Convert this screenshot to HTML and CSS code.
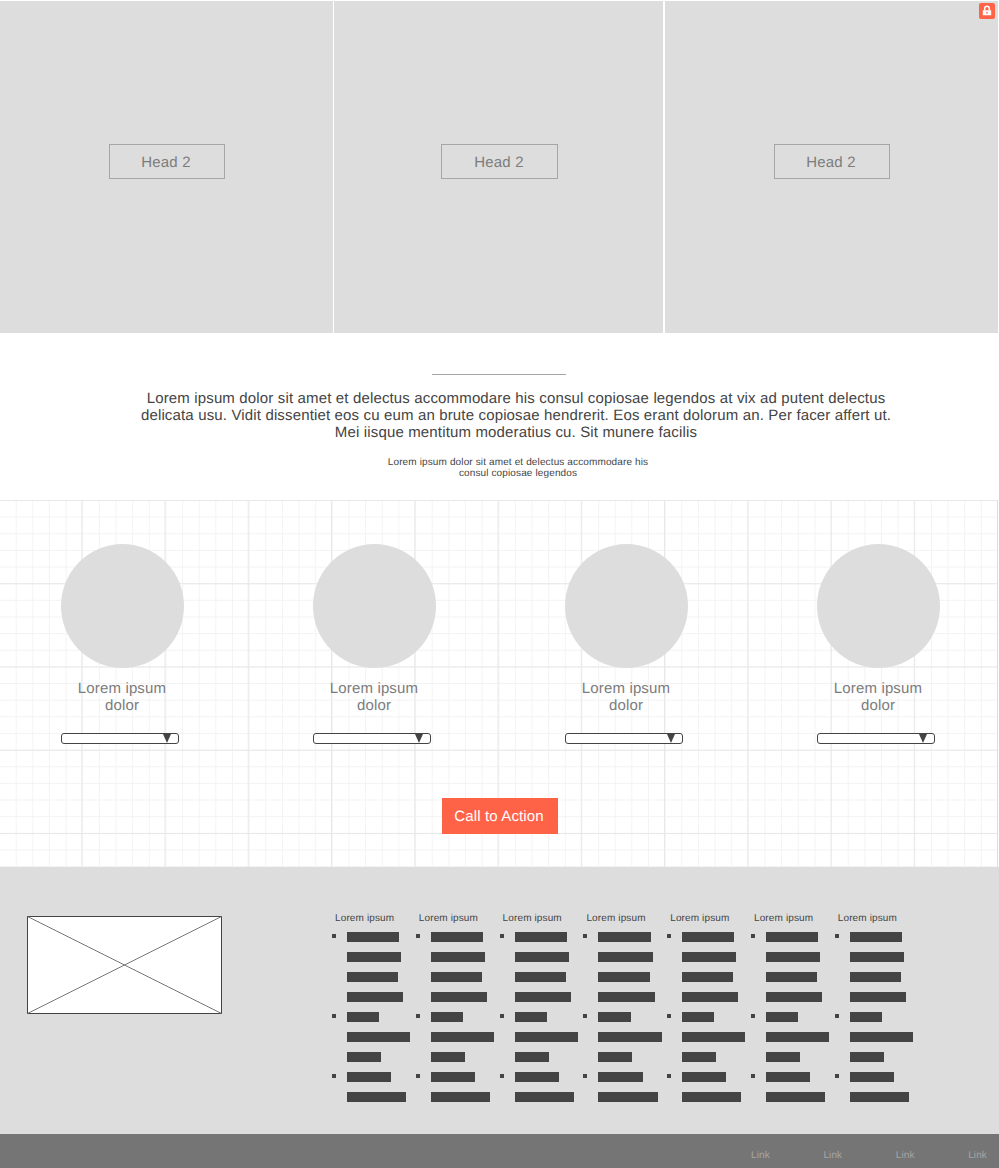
FILE: index.html
```html
<!DOCTYPE html>
<html lang="en">
<head>
<meta charset="utf-8">
<title>Wireframe</title>
<link rel="stylesheet" href="styles.css">
</head>
<body>
<section class="heroes">
  <div class="hero hero-a"><h2 class="head">Head 2</h2></div>
  <div class="hero hero-b"><h2 class="head head-wide">Head 2</h2></div>
  <div class="hero hero-c"><h2 class="head">Head 2</h2>
    <span class="lock"><svg viewBox="0 0 16 16" width="16" height="16"><path d="M5.7 7.2V5.5a2.3 2.3 0 0 1 4.6 0V7.2" fill="none" stroke="#fff" stroke-width="1.5"/><path d="M3.8 7.2h8.4v5.1H3.8z M7.4 8.8v2h1.2v-2z" fill="#fff" fill-rule="evenodd"/></svg></span>
  </div>
</section>
<section class="intro">
  <hr class="rule">
  <p class="lead">Lorem ipsum dolor sit amet et delectus accommodare his consul copiosae legendos at vix ad putent delectus delicata usu. Vidit dissentiet eos cu eum an brute copiosae hendrerit. Eos erant dolorum an. Per facer affert ut. Mei iisque mentitum moderatius cu. Sit munere facilis</p>
  <p class="sub">Lorem ipsum dolor sit amet et delectus accommodare his<br>consul copiosae legendos</p>
</section>
<section class="gridded">
  <div class="people">
    <div class="person"><div class="avatar"></div><p class="name">Lorem ipsum<br>dolor</p><div class="select"><span class="arrow"></span></div></div>
    <div class="person"><div class="avatar"></div><p class="name">Lorem ipsum<br>dolor</p><div class="select"><span class="arrow"></span></div></div>
    <div class="person"><div class="avatar"></div><p class="name">Lorem ipsum<br>dolor</p><div class="select"><span class="arrow"></span></div></div>
    <div class="person"><div class="avatar"></div><p class="name">Lorem ipsum<br>dolor</p><div class="select"><span class="arrow"></span></div></div>
  </div>
  <a class="cta">Call to Action</a>
</section>
<section class="footer">
  <div class="placeholder"><svg width="195" height="98" viewBox="0 0 195 98"><path d="M0.5 0.5L194.5 97.5M194.5 0.5L0.5 97.5" stroke="#777" stroke-width="1" fill="none"/></svg></div>
  <div class="cols">
    <div class="col"><h4 class="col-h">Lorem ipsum</h4><ul class="list"><li class="dot"><i class="b1"></i></li><li><i class="b2"></i></li><li><i class="b3"></i></li><li><i class="b4"></i></li><li class="dot"><i class="b5"></i></li><li><i class="b6"></i></li><li><i class="b7"></i></li><li class="dot"><i class="b8"></i></li><li><i class="b9"></i></li></ul></div>
    <div class="col"><h4 class="col-h">Lorem ipsum</h4><ul class="list"><li class="dot"><i class="b1"></i></li><li><i class="b2"></i></li><li><i class="b3"></i></li><li><i class="b4"></i></li><li class="dot"><i class="b5"></i></li><li><i class="b6"></i></li><li><i class="b7"></i></li><li class="dot"><i class="b8"></i></li><li><i class="b9"></i></li></ul></div>
    <div class="col"><h4 class="col-h">Lorem ipsum</h4><ul class="list"><li class="dot"><i class="b1"></i></li><li><i class="b2"></i></li><li><i class="b3"></i></li><li><i class="b4"></i></li><li class="dot"><i class="b5"></i></li><li><i class="b6"></i></li><li><i class="b7"></i></li><li class="dot"><i class="b8"></i></li><li><i class="b9"></i></li></ul></div>
    <div class="col"><h4 class="col-h">Lorem ipsum</h4><ul class="list"><li class="dot"><i class="b1"></i></li><li><i class="b2"></i></li><li><i class="b3"></i></li><li><i class="b4"></i></li><li class="dot"><i class="b5"></i></li><li><i class="b6"></i></li><li><i class="b7"></i></li><li class="dot"><i class="b8"></i></li><li><i class="b9"></i></li></ul></div>
    <div class="col"><h4 class="col-h">Lorem ipsum</h4><ul class="list"><li class="dot"><i class="b1"></i></li><li><i class="b2"></i></li><li><i class="b3"></i></li><li><i class="b4"></i></li><li class="dot"><i class="b5"></i></li><li><i class="b6"></i></li><li><i class="b7"></i></li><li class="dot"><i class="b8"></i></li><li><i class="b9"></i></li></ul></div>
    <div class="col"><h4 class="col-h">Lorem ipsum</h4><ul class="list"><li class="dot"><i class="b1"></i></li><li><i class="b2"></i></li><li><i class="b3"></i></li><li><i class="b4"></i></li><li class="dot"><i class="b5"></i></li><li><i class="b6"></i></li><li><i class="b7"></i></li><li class="dot"><i class="b8"></i></li><li><i class="b9"></i></li></ul></div>
    <div class="col"><h4 class="col-h">Lorem ipsum</h4><ul class="list"><li class="dot"><i class="b1"></i></li><li><i class="b2"></i></li><li><i class="b3"></i></li><li><i class="b4"></i></li><li class="dot"><i class="b5"></i></li><li><i class="b6"></i></li><li><i class="b7"></i></li><li class="dot"><i class="b8"></i></li><li><i class="b9"></i></li></ul></div>
  </div>
</section>
<nav class="bottom">
  <a class="link">Link</a><a class="link">Link</a><a class="link">Link</a><a class="link">Link</a>
</nav>
</body>
</html>
```
FILE: styles.css
```css
* { box-sizing: border-box; }
html, body { margin: 0; padding: 0; }
body { width: 999px; height: 1168px; overflow: hidden; background: #fff; font-family: "Liberation Sans", Arial, sans-serif; color: #444; text-rendering: geometricPrecision; -webkit-font-smoothing: antialiased; }

.heroes { display: flex; height: 333px; padding-top: 1px; }
.hero { position: relative; background: #ddd; display: flex; justify-content: center; padding-top: 143px; }
.hero-a { width: 333px; margin-right: 1px; }
.hero-b { width: 329px; margin-right: 2px; padding-left: 2px; }
.hero-c { width: 333px; }
.head { margin: 0; width: 116px; height: 35px; padding-right: 1px; border: 1px solid #a6a6a6; font-weight: 400; font-size: 15px; line-height: 36px; letter-spacing: .15px; text-align: center; color: #7c7c7c; }
.head-wide { width: 117px; }
.lock { position: absolute; top: 2px; right: 3px; width: 16px; height: 16px; background: #ff6347; border-radius: 2px; display: block; }
.lock svg { display: block; }

.intro { height: 167px; padding-top: 41px; text-align: center; }
.rule { width: 134px; height: 1px; margin: 0 0 15px 432px; border: 0; background: #a6a6a6; }
.lead { margin: 0 0 0 136px; width: 760px; font-size: 15px; line-height: 17px; letter-spacing: .15px; color: #444; }
.sub { margin: 16px 0 0 37px; font-size: 10px; line-height: 11px; letter-spacing: .13px; color: #444; }

.gridded { width: 998px; height: 367px; padding-top: 44px; border-right: 1px solid #ddd;
  background-color: #fff;
  background-image:
    linear-gradient(to right, transparent 81px, #e8e8e8 81px, #e8e8e8 82px, transparent 82px),
    linear-gradient(to bottom, #e8e8e8 1px, transparent 1px),
    linear-gradient(to right, transparent 15.5px, #f3f3f3 15.5px, #f3f3f3 16.5px, transparent 16.5px),
    linear-gradient(to bottom, #f3f3f3 1px, transparent 1px);
  background-size: 83.25px 83.25px, 83.25px 83.25px, 16.65px 16.65px, 16.65px 16.65px;
}
.people { display: grid; grid-template-columns: repeat(4, 252px); margin-left: -4px; }
.person { display: flex; flex-direction: column; align-items: center; }
.avatar { width: 123px; height: 124px; border-radius: 50%; background: #ddd; }
.name { margin: 12px 0 0; font-size: 15px; line-height: 17px; letter-spacing: .15px; text-align: center; color: #7c7c7c; }
.select { position: relative; width: 118px; height: 11px; margin: 19px 0 0 65px; border: 1px solid #444; border-radius: 3px; background: #fff; align-self: flex-start; }
.arrow { position: absolute; left: 101px; top: 0; width: 0; height: 0; border-left: 4.5px solid transparent; border-right: 4.5px solid transparent; border-top: 9px solid #444; }
.cta { display: block; width: 116px; height: 36px; margin: 54px 0 0 442px; padding-right: 2px; background: #ff6347; color: #fff; font-size: 15px; line-height: 38px; letter-spacing: .15px; text-align: center; }

.footer { position: relative; display: flex; height: 267px; background: #ddd; padding: 49px 0 0 27px; }
.placeholder { width: 195px; height: 98px; border: 1px solid #444; background: #fff; flex: none; position: relative; }
.placeholder svg { position: absolute; left: -1px; top: -1px; display: block; }
.cols { display: flex; margin-left: 112px; margin-top: -3px; }
.col { width: 83.8px; flex: none; }
.col-h { margin: 0 0 0 1px; font-weight: 400; font-size: 10px; line-height: 11px; letter-spacing: .13px; color: #444; height: 16px; white-space: nowrap; }
.list { list-style: none; margin: 3px 0 0; padding: 0 0 0 13px; }
.list li { position: relative; height: 20px; }
.list i { display: block; height: 10px; background: #444; }
.dot::before { content: ""; position: absolute; left: -15px; top: 2px; width: 4px; height: 4px; background: #444; }
.b1 { width: 52.2px; } .b2 { width: 54.2px; } .b3 { width: 51.2px; } .b4 { width: 56.2px; } .b5 { width: 32.2px; }
.b6 { width: 63.2px; } .b7 { width: 34px; } .b8 { width: 44.2px; } .b9 { width: 59.2px; }

.bottom { display: flex; justify-content: flex-end; height: 34px; background: #757575; padding: 16px 12px 0 0; gap: 53.5px; }
.link { font-size: 10px; line-height: 11px; letter-spacing: .13px; color: #a6a6a6; }
```
